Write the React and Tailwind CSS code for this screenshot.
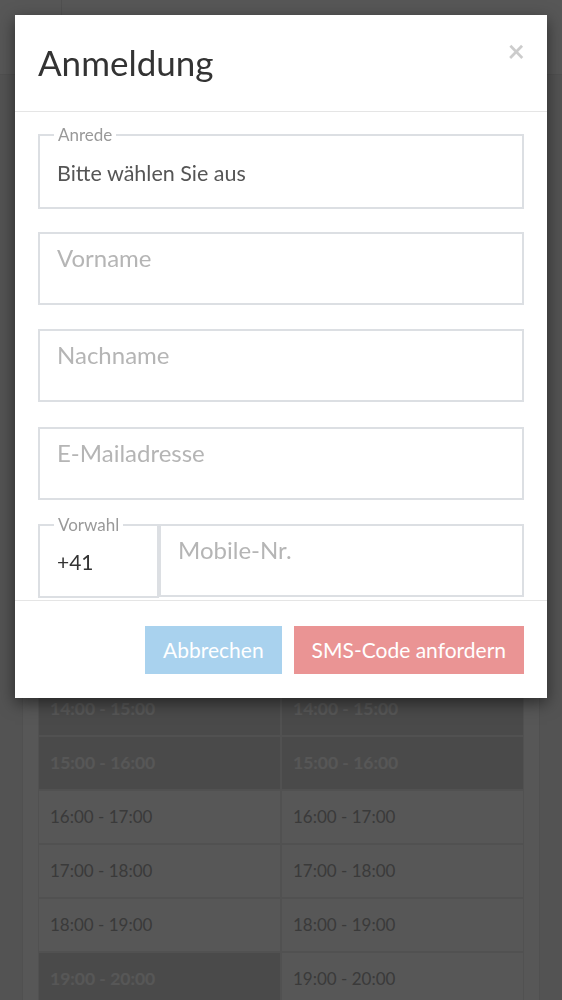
import React from "react";

const rows = [
  { time: "06:00 - 07:00", left: false, right: false },
  { time: "07:00 - 08:00", left: false, right: false },
  { time: "08:00 - 09:00", left: true, right: false },
  { time: "09:00 - 10:00", left: true, right: true },
  { time: "10:00 - 11:00", left: false, right: false },
  { time: "11:00 - 12:00", left: false, right: true },
  { time: "12:00 - 13:00", left: false, right: false },
  { time: "13:00 - 14:00", left: false, right: false },
  { time: "14:00 - 15:00", left: true, right: true },
  { time: "15:00 - 16:00", left: true, right: true },
  { time: "16:00 - 17:00", left: false, right: false },
  { time: "17:00 - 18:00", left: false, right: false },
  { time: "18:00 - 19:00", left: false, right: false },
  { time: "19:00 - 20:00", left: true, right: false },
  { time: "20:00 - 21:00", left: false, right: false },
];

const Slot = ({ time, booked }) => (
  <div
    className={`h-[54px] border border-[#ececec] flex items-center pl-[11px] ${
      booked
        ? "bg-[#d9d9d9] text-white font-bold text-[17.5px]"
        : "bg-white text-[#aaaaaa] text-[17px]"
    }`}
  >
    {time}
  </div>
);

const Field = ({ label, children, className = "" }) => (
  <fieldset className={`border-2 border-[#dcdfe3] ${className}`}>
    <legend className="ml-[14px] px-[4px] text-[17px] leading-[20px] text-[#999]">
      {label}
    </legend>
    {children}
  </fieldset>
);

const inputCls =
  "block w-full h-[73px] border-2 border-[#dcdfe3] px-[17px] pt-[4px] pb-[27px] text-[24px] text-[#333] placeholder:text-[#b5b5b5] outline-none";

export default function App() {
  return (
    <div className="min-h-screen bg-[#f3f3f3] font-['Lato','Open_Sans',sans-serif]">
      <header className="h-[75px] bg-white border-b border-[#e9e9e9] flex">
        <div className="w-[62px] border-r border-[#e9e9e9]" />
        <div className="flex-1" />
      </header>

      <main className="mx-[22px] bg-white border-x border-[#ebebeb] px-[15px] pt-[30px]">
        <h2 className="h-[40px] text-[22px] text-[#aaa]">Mittwoch</h2>
        <div className="mt-[51px] grid grid-cols-2 h-[54px] text-[17px] font-bold text-[#999]">
          <div className="pl-[11px] flex items-center">Platz 1</div>
          <div className="pl-[11px] flex items-center">Platz 2</div>
        </div>
        <div className="grid grid-cols-2">
          {rows.map((r) => (
            <React.Fragment key={r.time}>
              <Slot time={r.time} booked={r.left} />
              <Slot time={r.time} booked={r.right} />
            </React.Fragment>
          ))}
        </div>
      </main>

      <div className="fixed inset-0 bg-black/[0.66]" />

      <div className="fixed inset-0 p-[15px]">
        <div className="bg-white shadow-[0_5px_15px_rgba(0,0,0,0.5)]">
          <div className="h-[97px] border-b border-[#e5e5e5] flex items-start justify-between pl-[23px] pr-[22px] pt-[22px]">
            <h1 className="text-[35px] leading-[51px] text-[#333]">Anmeldung</h1>
            <button className="mt-[-2px] text-[30px] font-bold leading-none text-black/20">
              ×
            </button>
          </div>

          <div className="h-[488px] overflow-hidden px-[23px] pt-[13px]">
            <Field label="Anrede">
              <select className="block w-full appearance-none bg-transparent px-[17px] pt-[16px] pb-[22px] text-[21.5px] leading-[24px] text-[#555] outline-none">
                <option>Bitte wählen Sie aus</option>
                <option>Frau</option>
                <option>Herr</option>
              </select>
            </Field>

            <input className={`mt-[23px] ${inputCls}`} placeholder="Vorname" />
            <input className={`mt-[24px] ${inputCls}`} placeholder="Nachname" />
            <input className={`mt-[25px] ${inputCls}`} placeholder="E-Mailadresse" />

            <div className="mt-[15px] flex">
              <Field label="Vorwahl" className="w-[121px] shrink-0">
                <select className="block w-full appearance-none bg-transparent px-[17px] pt-[15px] pb-[22px] text-[21px] leading-[24px] text-[#333] outline-none">
                  <option>+41</option>
                  <option>+49</option>
                  <option>+43</option>
                </select>
              </Field>
              <input className={`mt-[9px] flex-1 ${inputCls}`} placeholder="Mobile-Nr." />
            </div>
          </div>

          <div className="border-t border-[#e5e5e5] flex justify-end gap-[12px] px-[23px] pt-[25px] pb-[24px]">
            <button className="h-[48px] px-[18px] bg-[#a9d2ee] text-white text-[21px]">
              Abbrechen
            </button>
            <button className="h-[48px] px-[18px] bg-[#ea9494] text-white text-[21px]">
              SMS-Code anfordern
            </button>
          </div>
        </div>
      </div>
    </div>
  );
}
